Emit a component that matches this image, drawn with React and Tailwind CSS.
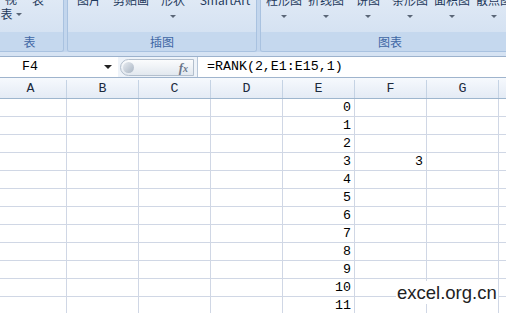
import React from 'react';

const cols = ['A', 'B', 'C', 'D', 'E', 'F', 'G', 'H'];
const rows = [0, 1, 2, 3, 4, 5, 6, 7, 8, 9, 10, 11];

const cjk = "font-['Microsoft_YaHei','Noto_Sans_CJK_SC',sans-serif]";
const mono = "font-['Liberation_Mono','Noto_Sans_CJK_SC',monospace]";

const Arrow = () => (
  <span className="block w-0 h-0 border-l-[3px] border-r-[3px] border-t-[3px] border-l-transparent border-r-transparent border-t-[#5a6677]" />
);

// ribbon button, label cut off by the top of the window
const RibbonBtn = ({ label, w = 'w-[42px]', arrow = true }) => (
  <div className={`${w} flex flex-col items-center shrink-0`}>
    <span className="-mt-[7px] text-[12px] leading-[14px] text-[#1e395b] whitespace-nowrap">{label}</span>
    {arrow && <div className="mt-[8px]"><Arrow /></div>}
  </div>
);

const Group = ({ label, className, children }) => (
  <div className={`flex flex-col border border-t-0 border-[#a9c2e0] rounded-b-[3px] overflow-hidden shrink-0 ${className}`}>
    <div className="h-[32px] flex bg-gradient-to-b from-[#dfe9f5] to-[#d5e2f2]">{children}</div>
    <div className="h-[19px] flex items-center justify-center bg-[#c5d8ee] text-[12px] text-[#3f67a5]">{label}</div>
  </div>
);

export default function App() {
  return (
    <div className={`relative w-[506px] h-[313px] overflow-hidden bg-white ${cjk}`}>
      {/* 功能区 */}
      <div className="bg-[#c3d6ed]">
        <div className="h-[52px] flex gap-[3px] -ml-[5px]">
          <Group label="表" className="w-[69px]">
            <div className="w-[26px] flex flex-col items-center pl-[4px]">
              <span className="-mt-[8px] text-[12px] leading-[14px] text-[#1e395b]">视</span>
              <div className="flex items-center gap-[3px] mt-[1px]">
                <span className="text-[12px] leading-[14px] text-[#1e395b]">表</span>
                <Arrow />
              </div>
            </div>
            <div className="ml-[10px]">
              <span className="block -mt-[7px] text-[12px] leading-[14px] text-[#1e395b]">表</span>
            </div>
          </Group>
          <Group label="插图" className="w-[190px]">
            <div className="flex">
              <RibbonBtn label="图片" arrow={false} />
              <RibbonBtn label="剪贴画" arrow={false} />
              <RibbonBtn label="形状" />
              <RibbonBtn label="SmartArt" w="w-[62px]" arrow={false} />
            </div>
          </Group>
          <Group label="图表" className="w-[260px]">
            <div className="pl-[2px] flex">
              <RibbonBtn label="柱形图" />
              <RibbonBtn label="折线图" />
              <RibbonBtn label="饼图" />
              <RibbonBtn label="条形图" />
              <RibbonBtn label="面积图" />
              <RibbonBtn label="散点图" />
            </div>
          </Group>
        </div>
        <div className="h-[5px] bg-[#d6e3f3] border-b border-[#9cb2cd]" />
      </div>

      {/* 编辑栏 */}
      <div className="h-[21px] flex items-center bg-white border-b border-[#9fb4cd]">
        <div className="w-[118px] h-full flex items-center justify-between pl-[22px] pr-[6px]">
          <span className={`${mono} text-[13.3px] text-black`}>F4</span>
          <span className="block w-0 h-0 border-l-[4px] border-r-[4px] border-t-[4px] border-l-transparent border-r-transparent border-t-[#222]" />
        </div>
        <div className="w-[79px] h-full flex items-center bg-[#eef3f9]">
          <div className="relative w-[74px] h-[17px] ml-[2px] rounded-l-full rounded-r-[2px] border border-[#b3bfcd] bg-gradient-to-b from-[#fbfcfd] to-[#e2e8ef] flex items-center justify-end pr-[5px]">
            <span className="absolute left-[2px] top-[2px] w-[11px] h-[11px] rounded-full bg-gradient-to-br from-[#e8ecf1] to-[#a9b5c3]" />
            <span className="font-['Liberation_Serif',serif] italic font-bold text-[13px] text-[#6b778a] leading-none">f<span className="text-[10px]">x</span></span>
          </div>
        </div>
        <div className="h-full flex-1 flex items-center border-l border-[#b7c6d8] pl-[9px]">
          <span className={`${mono} text-[13.3px] text-black`}>=RANK(2,E1:E15,1)</span>
        </div>
      </div>

      {/* 工作表 */}
      <div className="-ml-[5px]">
        <div className="flex h-[21px] pt-[2px] bg-gradient-to-b from-[#f6f9fd] to-[#e4ebf5] border-b border-[#9eb6ce]">
          {cols.map((c) => (
            <div key={c} className={`w-[72px] shrink-0 flex items-center justify-center border-r border-[#c5d3e4] ${mono} text-[13.3px] text-[#1c2a3d]`}>
              {c}
            </div>
          ))}
        </div>
        {rows.map((r) => (
          <div key={r} className="flex h-[18px] border-b border-[#d0d7e5]">
            {cols.map((c) => (
              <div key={c} className={`w-[72px] shrink-0 border-r border-[#d0d7e5] flex items-end justify-end pr-[3px] ${mono} text-[13.3px] leading-[16px] text-black`}>
                {c === 'E' ? r : c === 'F' && r === 3 ? 3 : ''}
              </div>
            ))}
          </div>
        ))}
      </div>

      {/* 水印 */}
      <div className="absolute left-[396px] top-[281px] px-[1px] font-['Liberation_Sans',sans-serif] text-[18.5px] text-[#222] bg-white leading-[23px]">
        excel.org.cn
      </div>
    </div>
  );
}
